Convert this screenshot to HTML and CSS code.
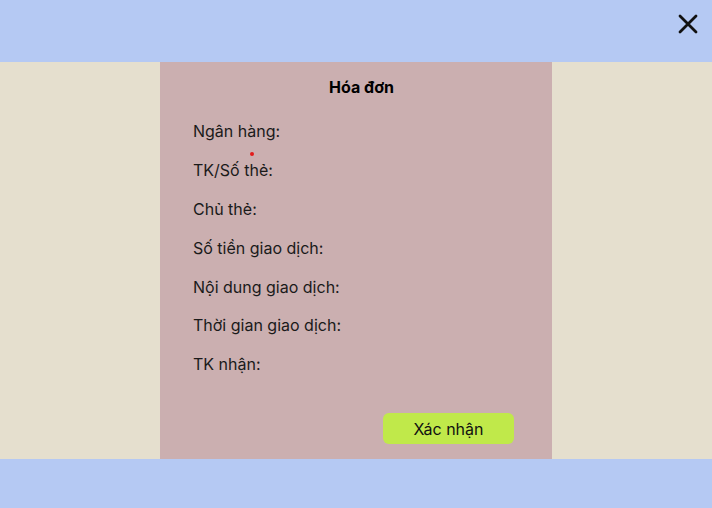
FILE: index.html
```html
<!DOCTYPE html>
<html lang="vi">
<head>
<meta charset="utf-8">
<link rel="stylesheet" href="styles.css">
</head>
<body>
<div class="page">
  <header class="top">
    <button class="close" aria-label="Đóng">
      <svg width="20" height="20" viewBox="0 0 20 20"><path d="M2 2 L18 18 M18 2 L2 18" stroke="#111" stroke-width="2.8" stroke-linecap="round"/></svg>
    </button>
  </header>
  <main class="middle">
    <section class="panel">
      <h1 class="title">Hóa đơn</h1>
      <div class="fields">
        <div class="field">Ngân hàng:<span class="dot"></span></div>
        <div class="field">TK/Số thẻ:</div>
        <div class="field">Chủ thẻ:</div>
        <div class="field">Số tiền giao dịch:</div>
        <div class="field">Nội dung giao dịch:</div>
        <div class="field">Thời gian giao dịch:</div>
        <div class="field">TK nhận:</div>
      </div>
      <div class="actions">
        <button class="confirm">Xác nhận</button>
      </div>
    </section>
  </main>
  <footer class="bottom"></footer>
</div>
</body>
</html>
```
FILE: styles.css
```css
* { box-sizing: border-box; }
html, body { margin: 0; padding: 0; }
body {
  font-family: Inter, "Noto Sans", sans-serif;
  color: #1a1a1a;
  background: #b5c9f3;
}
.page {
  width: 712px;
  height: 508px;
  display: flex;
  flex-direction: column;
}
.top {
  height: 62px;
  background: #b5c9f3;
  display: flex;
  justify-content: flex-end;
  align-items: flex-start;
  padding: 14px 14px 0 0;
}
.close {
  border: 0;
  background: none;
  padding: 0;
  width: 20px;
  height: 20px;
  cursor: pointer;
}
.close svg { display: block; }
.middle {
  height: 397px;
  background: #e5dfce;
  display: flex;
  justify-content: flex-start;
  padding-left: 160px;
}
.panel {
  width: 392px;
  background: #cbafb0;
  padding: 15px 38px 0 33px;
  margin: 0;
  display: flex;
  flex-direction: column;
}
.title {
  margin: 0;
  font-size: 16px;
  font-weight: 700;
  line-height: 20px;
  text-align: center;
  color: #000;
  padding-left: 16px;
}
.fields {
  margin-top: 24px;
  display: flex;
  flex-direction: column;
  gap: 18.9px;
}
.field {
  position: relative;
  font-size: 16px;
  line-height: 20px;
  color: #1a1a1a;
}
.dot {
  position: absolute;
  left: 57px;
  top: 31px;
  width: 4px;
  height: 4px;
  border-radius: 50%;
  background: #e31b1b;
}
.actions {
  margin-top: 39px;
  display: flex;
  justify-content: flex-end;
}
.confirm {
  width: 131px;
  height: 31px;
  border: 0;
  border-radius: 6px;
  background: #c0e94a;
  font-family: Inter, "Noto Sans", sans-serif;
  font-size: 16px;
  color: #111;
  padding: 0;
}
.bottom {
  flex: 1;
  background: #b5c9f3;
}
```
